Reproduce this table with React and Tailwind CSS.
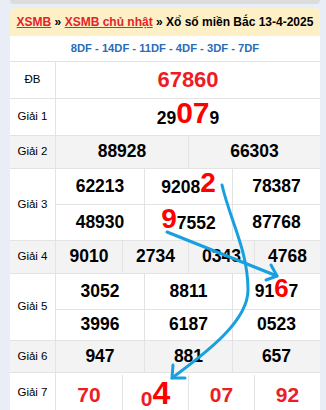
import React from 'react';

const red = 'text-[#ee1c25]';

const Cell = ({ children, className = '' }) => (
  <div className={`flex items-center justify-center border-l border-[#e3e3e3] first:border-l-0 ${className}`}>
    {children}
  </div>
);

const Row = ({ label, gray, children, className = '' }) => (
  <div className={`flex border-b border-[#e3e3e3] ${gray ? 'bg-[#f3f3f3]' : 'bg-white'}`}>
    <div className="w-[46px] shrink-0 flex items-center justify-center border-r border-[#e3e3e3] text-[11.5px] text-black">
      {label}
    </div>
    <div className={`flex-1 ${className}`}>{children}</div>
  </div>
);

const Num = ({ children, className = '' }) => (
  <span className={`text-[17.5px] font-bold text-black leading-none ${className}`}>{children}</span>
);

const App = () => {
  return (
    <div className="relative w-[326px] h-[410px] overflow-hidden bg-[#e9eef6] font-['Liberation_Sans',Arial,sans-serif]">
      <div className="ml-[10px] mr-[6px] h-[4px] bg-[#dcdcdc] rounded-b-md" />

      <div className="ml-[10px] mr-[6px] mt-[4px] bg-white rounded-t-md">
        {/* tieu de */}
        <div className="h-[28px] bg-[#fdf0c6] rounded-t-md flex items-center justify-center text-[12px] font-bold text-black whitespace-pre">
          <span className="text-[#e3232a] underline">XSMB</span>
          <span> » </span>
          <span className="text-[#e3232a] underline">XSMB chủ nhật</span>
          <span> » Xổ số miền Bắc 13-4-2025</span>
        </div>

        <div className="h-[26px] flex items-center justify-center border-b border-[#e3e3e3] text-[11.2px] font-bold text-[#2a6cb6]">
          8DF - 14DF - 11DF - 4DF - 3DF - 7DF
        </div>

        <Row label="ĐB" className="h-[36px] flex items-center justify-center">
          <span className={`text-[22px] font-bold leading-none ${red}`}>67860</span>
        </Row>

        <Row label="Giải 1" className="h-[36px] flex items-end justify-center pb-[8px]">
          <Num>29</Num>
          <span className="text-[30px] font-bold leading-none text-[#ff0000] -mb-[1px]">07</span>
          <Num>9</Num>
        </Row>

        <Row label="Giải 2" gray className="h-[32px] grid grid-cols-2">
          <Cell><Num>88928</Num></Cell>
          <Cell><Num>66303</Num></Cell>
        </Row>

        <Row label="Giải 3" className="">
          <div className="h-[36px] grid grid-cols-3 border-b border-[#e3e3e3]">
            <Cell><Num>62213</Num></Cell>
            <Cell className="items-end pb-[9px]">
              <Num>9208</Num>
              <span className="text-[28px] font-bold leading-none text-[#ff0000] -mb-[1px]">2</span>
            </Cell>
            <Cell><Num>78387</Num></Cell>
          </div>
          <div className="h-[35px] grid grid-cols-3">
            <Cell><Num>48930</Num></Cell>
            <Cell className="items-end pb-[8px]">
              <span className="text-[28px] font-bold leading-none text-[#ff0000] -mb-[1px]">9</span>
              <Num>7552</Num>
            </Cell>
            <Cell><Num>87768</Num></Cell>
          </div>
        </Row>

        <Row label="Giải 4" gray className="h-[32px] grid grid-cols-4">
          <Cell><Num>9010</Num></Cell>
          <Cell><Num>2734</Num></Cell>
          <Cell><Num>0343</Num></Cell>
          <Cell><Num>4768</Num></Cell>
        </Row>

        <Row label="Giải 5">
          <div className="h-[36px] grid grid-cols-3 border-b border-[#e3e3e3]">
            <Cell><Num>3052</Num></Cell>
            <Cell><Num>8811</Num></Cell>
            <Cell className="items-end pb-[9px]">
              <Num>91</Num>
              <span className="text-[26px] font-bold leading-none text-[#ff0000] -mb-[1px]">6</span>
              <Num>7</Num>
            </Cell>
          </div>
          <div className="h-[30px] grid grid-cols-3">
            <Cell><Num>3996</Num></Cell>
            <Cell><Num>6187</Num></Cell>
            <Cell><Num>0523</Num></Cell>
          </div>
        </Row>

        <Row label="Giải 6" gray className="h-[31px] grid grid-cols-3">
          <Cell><Num>947</Num></Cell>
          <Cell><Num>881</Num></Cell>
          <Cell><Num>657</Num></Cell>
        </Row>

        <Row label="Giải 7" className="h-[40px] grid grid-cols-4 pt-[2px]">
          <Cell><span className={`text-[21px] font-bold leading-none ${red}`}>70</span></Cell>
          <Cell className="items-end pb-[4px]">
            <span className={`text-[21px] font-bold leading-none ${red}`}>0</span>
            <span className="text-[32px] font-bold leading-none text-[#ff0000]">4</span>
          </Cell>
          <Cell><span className={`text-[21px] font-bold leading-none ${red}`}>07</span></Cell>
          <Cell><span className={`text-[21px] font-bold leading-none ${red}`}>92</span></Cell>
        </Row>
      </div>

      {/* mui ten ve tay */}
      <svg className="absolute inset-0 pointer-events-none" width="326" height="410" viewBox="0 0 326 410">
        <g fill="none" stroke="#189fdf" strokeWidth="3" strokeLinecap="round" strokeLinejoin="round">
          <path d="M222 185 C230 220 248 250 248 290 C248 320 210 350 172 378" />
          <path d="M172 378 L185 378 M172 378 L173 365" />
          <path d="M167 232 L277 276" />
          <path d="M277 276 L271 265 M277 276 L266 280" />
        </g>
      </svg>
    </div>
  );
};

export default App;
